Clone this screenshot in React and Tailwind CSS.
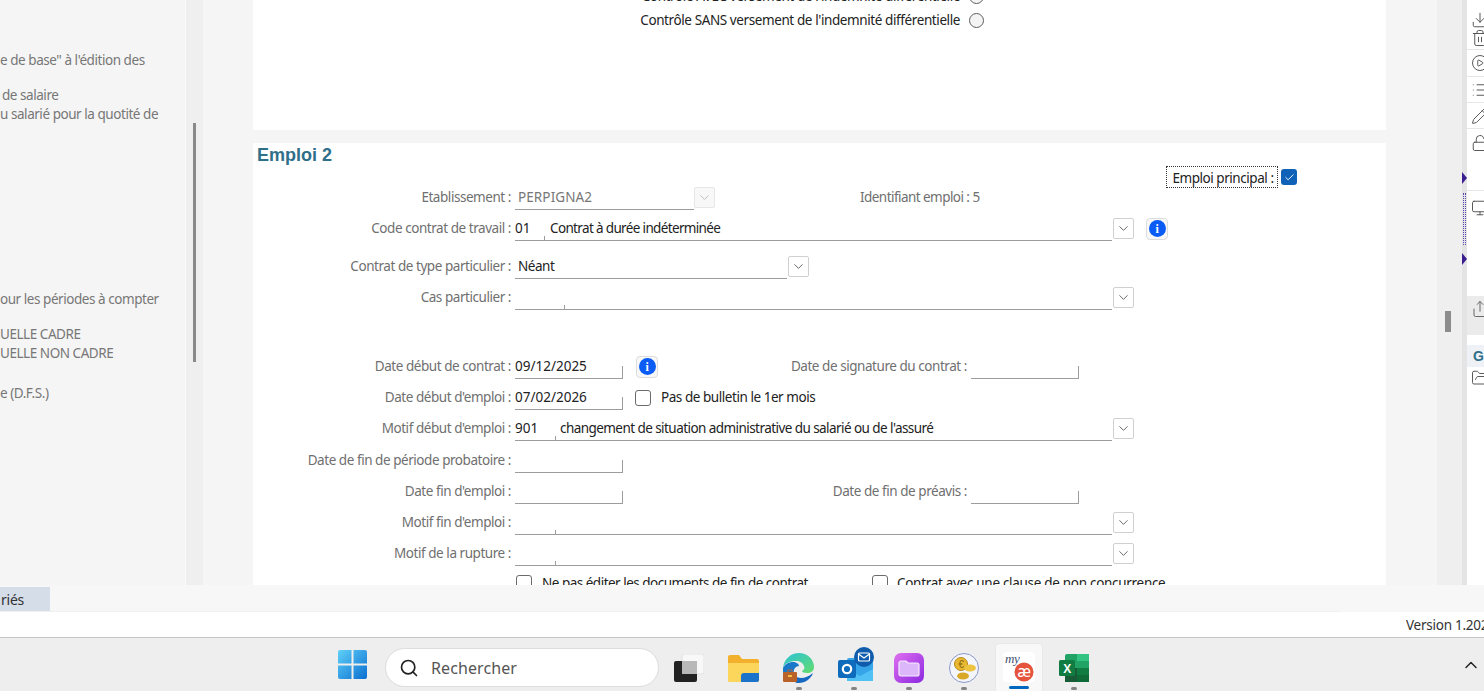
import React from "react";
import { Download, Trash2, CirclePlay, List, Pencil, LockOpen, Monitor, Share, FolderOpen, Check, ChevronDown, ChevronUp, Search } from "lucide-react";

const Label = ({ children, className = "w-[258px]" }) => (
  <div className={`${className} shrink-0 text-right text-[#6f6f6f] whitespace-nowrap`}>{children}</div>
);

const ComboBtn = ({ dim }) => (
  <div className={`w-[21px] h-[21px] shrink-0 border rounded-[2px] flex items-center justify-center ${dim ? "border-[#e6e6e6] text-[#b5b5b5] bg-[#f8f8f8]" : "border-[#d0d0d0] text-[#555555] bg-white"}`}>
    <ChevronDown size={15} strokeWidth={1.4} />
  </div>
);

const InfoBtn = () => (
  <div className="w-[22px] h-[22px] shrink-0 rounded-[4px] border border-[#dcdcdc] bg-[#f8f8f8] flex items-center justify-center">
    <div className="w-[17px] h-[17px] rounded-full bg-[#0b5cf5] flex items-center justify-center text-white text-[12px] font-bold leading-none [font-family:'Liberation_Serif',serif]">i</div>
  </div>
);

const DateField = ({ value, w = "w-[108px]" }) => (
  <div className={`${w} shrink-0 h-[23px] flex items-end justify-between border-b border-[#9c9c9c] mt-[1px]`}>
    <span className="self-center text-[#222222] tracking-normal">{value}</span>
    <span className="w-px h-[12px] bg-[#9c9c9c]"></span>
  </div>
);

// champ code + libelle, avec le petit trait de separation
const CodeField = ({ code, text, codeW = "w-[40px]", w = "w-[597px]", textClass = "" }) => (
  <div className="flex items-start">
    <div className={`${w} h-[23px] flex items-end border-b border-[#9c9c9c] mt-[1px] text-[#222222]`}>
      <span className={`${codeW} shrink-0 self-center tracking-normal`}>{code}</span>
      <span className="w-px h-[4px] bg-[#9c9c9c] shrink-0"></span>
      <span className={`self-center ml-[4px] whitespace-nowrap ${textClass}`}>{text}</span>
    </div>
    <div className="ml-px mt-px"><ComboBtn /></div>
  </div>
);

const Row = ({ label, children, className = "" }) => (
  <div className={`h-[31px] flex items-center gap-[4px] ${className}`}>
    <Label>{label}</Label>
    {children}
  </div>
);

const Box = ({ className = "" }) => <div className={`w-[16px] h-[16px] shrink-0 rounded-[3px] border border-[#6b6b6b] bg-white ${className}`}></div>;

const Radio = () => <div className="w-[15px] h-[15px] shrink-0 rounded-full border border-[#5f5f5f] bg-[#f4f4f4]"></div>;

function Form() {
  return (
    <div className="flex-1 flex flex-col overflow-hidden bg-[#f5f5f5]">
      <div className="h-[130px] shrink-0 bg-white overflow-hidden flex flex-col items-end pr-[402px] tracking-[-0.4px]">
        <div className="flex items-center gap-[9px] h-[24px] -mt-[16px] text-[#222222]">
          <span>Contrôle AVEC versement de l'indemnité différentielle</span><Radio />
        </div>
        <div className="flex items-center gap-[9px] h-[24px] text-[#222222]">
          <span>Contrôle SANS versement de l'indemnité différentielle</span><Radio />
        </div>
      </div>
      <div className="mt-[13px] flex-1 bg-white overflow-hidden">
        <div className="h-[39px] flex justify-between items-start pl-[4px] pr-[89px]">
          <div className="mt-[1px] text-[18px] tracking-normal leading-[22px] font-bold text-[#2f6f8a] [font-family:'Liberation_Sans',sans-serif]">Emploi 2</div>
          <div className="mt-[23px] flex items-center gap-[3px]">
            <div className="w-[112px] h-[22px] border border-dotted border-[#333333] flex items-center justify-center text-[#222222] pt-[2px] pl-[2px]">Emploi principal :</div>
            <div className="w-[16px] h-[16px] rounded-[3px] bg-[#0f62b8] flex items-center justify-center text-white"><Check size={11} strokeWidth={2} /></div>
          </div>
        </div>

        <Row label="Etablissement :">
          <div className="w-[179px] h-[23px] flex items-center border-b border-[#9c9c9c] mt-[1px] pl-[3px] text-[#777777] tracking-[0.1px]">PERPIGNA2</div>
          <div className="-ml-[4px]"><ComboBtn dim /></div>
          <div className="ml-[141px] text-[#6f6f6f] tracking-[-0.55px]">Identifiant emploi : 5</div>
        </Row>
        <Row label="Code contrat de travail :">
          <CodeField code="01" text="Contrat à durée indéterminée" codeW="w-[29px]" textClass="tracking-[-0.65px] ml-[5px]" />
          <div className="ml-[8px]"><InfoBtn /></div>
        </Row>
        <Row label="Contrat de type particulier :" className="mt-[7px]">
          <div className="w-[272px] h-[23px] flex items-center border-b border-[#9c9c9c] mt-[1px] pl-[3px] text-[#222222]">Néant</div>
          <div className="-ml-[3px]"><ComboBtn /></div>
        </Row>
        <Row label="Cas particulier :">
          <CodeField code="" text="" codeW="w-[49px]" />
        </Row>

        <Row label="Date début de contrat :" className="mt-[38px]">
          <DateField value="09/12/2025" />
          <div className="ml-[9px]"><InfoBtn /></div>
          <Label className="w-[305px]">Date de signature du contrat :</Label>
          <DateField value="" />
        </Row>
        <Row label="Date début d'emploi :">
          <DateField value="07/02/2026" />
          <Box className="ml-[8px]" />
          <span className="ml-[6px] text-[#222222]">Pas de bulletin le 1er mois</span>
        </Row>
        <Row label="Motif début d'emploi :">
          <CodeField code="901" text="changement de situation administrative du salarié ou de l'assuré" textClass="tracking-[-0.56px]" />
        </Row>
        <Row label="Date de fin de période probatoire :" className="mt-[1px]">
          <DateField value="" />
        </Row>
        <Row label="Date fin d'emploi :">
          <DateField value="" />
          <Label className="w-[340px]">Date de fin de préavis :</Label>
          <DateField value="" />
        </Row>
        <Row label="Motif fin d'emploi :"><CodeField code="" text="" /></Row>
        <Row label="Motif de la rupture :"><CodeField code="" text="" /></Row>
        <div className="h-[28px] flex items-center pl-[263px] text-[#222222]">
          <Box />
          <span className="ml-[10px] w-[330px] tracking-[-0.5px]">Ne pas éditer les documents de fin de contrat</span>
          <Box />
          <span className="ml-[9px] whitespace-nowrap tracking-[-0.3px]">Contrat avec une clause de non concurrence</span>
        </div>
      </div>
    </div>
  );
}

const Tool = ({ icon: Icon, h, sep, pt }) => (
  <div className={`${h} ${pt || ""} shrink-0 flex pl-[4px] ${pt ? "items-start" : "items-center"} ${sep ? "border-b border-[#e6e6e6]" : ""}`}>
    <Icon size={18} strokeWidth={1.3} className="shrink-0 text-[#555555]" />
  </div>
);

function Toolbar() {
  return (
    <div className="w-[17px] shrink-0 bg-white overflow-hidden flex flex-col">
      <div className="h-[11px] shrink-0"></div>
      <Tool icon={Download} h="h-[18px]" />
      <Tool icon={Trash2} h="h-[21px]" sep pt="pt-0" />
      <Tool icon={CirclePlay} h="h-[27px]" sep />
      <Tool icon={List} h="h-[26px]" sep />
      <Tool icon={Pencil} h="h-[26px]" sep />
      <Tool icon={LockOpen} h="h-[62px]" pt="pt-[5px]" sep />
      <Tool icon={Monitor} h="h-[105px]" pt="pt-[8px]" />
      <div className="h-[39px] shrink-0 bg-[#ebebeb] flex items-start pl-[4px] pt-[4px] text-[#666666]"><Share size={18} strokeWidth={1.3} className="shrink-0" /></div>
      <div className="h-[10px] shrink-0"></div>
      <div className="h-[22px] shrink-0 bg-[#eef2f6] pl-[6px] flex items-center text-[14px] font-bold text-[#2f6f8a] [font-family:'Liberation_Sans',sans-serif]">G</div>
      <Tool icon={FolderOpen} h="h-[22px]" />
    </div>
  );
}

const Tri = () => (
  <svg width="5" height="12" viewBox="0 0 5 12" className="shrink-0"><path d="M0 0L5 6L0 12Z" fill="#3b1e8f" /></svg>
);

function MyAe() {
  return (
    <svg width="32" height="30" viewBox="0 0 32 30">
      <rect width="32" height="30" rx="4" fill="#ffffff" />
      <text x="2" y="11" fontSize="13" fontStyle="italic" fill="#3f4f6e" fontFamily="Liberation Serif, serif">my</text>
      <circle cx="21" cy="20" r="9.500" fill="#e5533d" />
      <text x="21" y="25" fontSize="16" textAnchor="middle" fill="#ffffff" fontFamily="Noto Sans, sans-serif">æ</text>
    </svg>
  );
}

const Slot = ({ children, pill }) => (
  <div className="w-[55px] shrink-0 h-full flex flex-col items-center">
    <div className="h-[15px] shrink-0"></div>
    <div className="h-[30px] w-full flex items-center justify-center">{children}</div>
    {pill && <div className="mt-[4px] w-[6px] h-[3px] rounded-full bg-[#858585]"></div>}
  </div>
);

function Taskbar() {
  return (
    <div className="h-[54px] shrink-0 bg-[#eeeeee] border-t border-[#c6c6c6] flex items-stretch">
      <div className="ml-[338px] self-center shrink-0 -mt-[1px]">
        <svg width="29" height="29" viewBox="0 0 29 29">
          <defs>
            <linearGradient id="win" x1="0" y1="0" x2="1" y2="1"><stop offset="0" stopColor="#5fd0f8" /><stop offset="1" stopColor="#0a6fd0" /></linearGradient>
          </defs>
          <path d="M0 2a2 2 0 0 1 2-2h11.500v13.500H0zM15.500 0H27a2 2 0 0 1 2 2v11.500H15.500zM0 15.500h13.500V29H2a2 2 0 0 1-2-2zM15.500 15.500H29V27a2 2 0 0 1-2 2H15.500z" fill="url(#win)" />
        </svg>
      </div>
      <div className="ml-[18px] mt-[10px] w-[274px] h-[39px] shrink-0 rounded-full bg-white border border-[#dcdcdc] flex items-center pl-[13px] text-[#555555] text-[16px] tracking-[0.1px]">
        <Search size={20} strokeWidth={2} className="text-[#222222] shrink-0" />
        <span className="ml-[12px]">Rechercher</span>
      </div>
      <div className="ml-[2px] flex h-full">
        <Slot>
          <svg width="30" height="28" viewBox="0 0 30 28">
            <rect x="8" y="0" width="22" height="20" rx="2" fill="#f8f8f8" stroke="#e2e2e2" />
            <rect x="0" y="7" width="23" height="21" rx="2" fill="#222222" />
            <rect x="8" y="7" width="15" height="13" fill="#b8b8b8" />
          </svg>
        </Slot>
        <Slot>
          <svg width="31" height="27" viewBox="0 0 31 27">
            <path d="M0 2a2 2 0 0 1 2-2h9l3 4h15a2 2 0 0 1 2 2v19a2 2 0 0 1-2 2H2a2 2 0 0 1-2-2z" fill="#f2b02c" />
            <path d="M0 8h31v17a2 2 0 0 1-2 2H2a2 2 0 0 1-2-2z" fill="#fbd65b" />
            <path d="M16 18h15v7a2 2 0 0 1-2 2H13v-6a3 3 0 0 1 3-3z" fill="#1b74c9" />
          </svg>
        </Slot>
        <Slot pill>
          <svg width="31" height="30" viewBox="0 0 31 30">
            <defs>
              <linearGradient id="edge" x1="0" y1="0" x2="1" y2="1"><stop offset="0" stopColor="#2cc3d8" /><stop offset="1" stopColor="#63dc6e" /></linearGradient>
            </defs>
            <path d="M0 15C1 6 8 0 16 0c8 0 15 6 15 14 0 4-3 6-7 6-3 0-5-1-5-2 2-1 3-3 2-5-1-3-4-5-8-5C7 8 2 10 0 15z" fill="url(#edge)" />
            <path d="M0 15c2-4 6-6 10-6 3 0 6 2 6 4-3 0-6 3-5 7H0z" fill="#1a78c8" />
            <path d="M12 23c4 3 11 3 18-3-2 6-8 10-14 10-2 0-3 0-4-1z" fill="#1668c0" />
            <rect x="0" y="19" width="14" height="10" rx="1" fill="#b8622a" />
            <rect x="5" y="17" width="4" height="3" fill="none" stroke="#b8622a" />
            <rect x="5" y="22" width="4" height="2" fill="#f3c14a" />
          </svg>
        </Slot>
        <Slot pill>
          <svg width="36" height="36" viewBox="0 0 36 36" className="-mt-[6px] ml-[4px]">
            <rect x="9" y="11" width="26" height="23" rx="2" fill="#35a5e8" />
            <path d="M9 22l13 7 13-7v12H9z" fill="#50c0f5" />
            <rect x="0" y="13" width="18" height="18" rx="2" fill="#0f6cbd" />
            <circle cx="9" cy="22" r="4.200" fill="none" stroke="#ffffff" strokeWidth="2.200" />
            <circle cx="26" cy="10" r="10" fill="#0f5cad" />
            <rect x="20.500" y="6" width="11" height="8" rx="1" fill="none" stroke="#ffffff" strokeWidth="1.200" />
            <path d="M20.500 7l5.500 4 5.500-4" fill="none" stroke="#ffffff" strokeWidth="1.200" />
          </svg>
        </Slot>
        <Slot pill>
          <svg width="30" height="30" viewBox="0 0 30 30">
            <defs>
              <linearGradient id="pur" x1="0" y1="0" x2="1" y2="1"><stop offset="0" stopColor="#e070f0" /><stop offset="1" stopColor="#8a28e0" /></linearGradient>
            </defs>
            <rect width="30" height="30" rx="7" fill="url(#pur)" />
            <path d="M5 10a2 2 0 0 1 2-2h5l2 2h9a2 2 0 0 1 2 2v9a2 2 0 0 1-2 2H7a2 2 0 0 1-2-2z" fill="#dcb8fa" stroke="#f6ebff" strokeWidth="1.200" />
          </svg>
        </Slot>
        <Slot pill>
          <svg width="30" height="30" viewBox="0 0 30 30">
            <circle cx="15" cy="15" r="14.500" fill="#f4f6fb" stroke="#8b97c9" />
            <circle cx="12" cy="11" r="6.500" fill="#e8b930" stroke="#b98a1a" />
            <text x="12" y="14.500" fontSize="10" textAnchor="middle" fill="#8a6410" fontFamily="Liberation Sans, sans-serif">€</text>
            <ellipse cx="21" cy="15" rx="6" ry="3.500" fill="#edc440" />
            <ellipse cx="14" cy="23" rx="6" ry="3.500" fill="#d9a828" />
          </svg>
        </Slot>
        <div className="w-[55px] shrink-0 h-full flex justify-center">
          <div className="w-[48px] h-[48px] mt-[5px] rounded-t-[4px] bg-[#f8f8f8] border border-[#e8e8e8] border-b-0 flex flex-col items-center">
            <div className="mt-[8px]"><MyAe /></div>
            <div className="mt-[4px] w-[20px] h-[3px] rounded-full bg-[#0067c0]"></div>
          </div>
        </div>
        <Slot pill>
          <svg width="30" height="28" viewBox="0 0 30 28">
            <rect x="6" y="0" width="24" height="28" rx="2" fill="#21a366" />
            <rect x="18" y="0" width="12" height="7" fill="#33c481" />
            <rect x="18" y="14" width="12" height="7" fill="#107c41" />
            <rect x="6" y="14" width="12" height="14" fill="#185c37" />
            <rect x="18" y="21" width="12" height="7" fill="#0e6b38" />
            <rect x="0" y="6" width="16" height="16" rx="1.500" fill="#107c41" />
            <text x="8" y="18.500" fontSize="12" fontWeight="700" textAnchor="middle" fill="#ffffff" fontFamily="Liberation Sans, sans-serif">X</text>
          </svg>
        </Slot>
      </div>
      <div className="ml-auto mr-[3px] self-center text-[#222222]"><ChevronUp size={20} strokeWidth={1.7} /></div>
    </div>
  );
}

export default function App() {
  return (
    <div className="w-[1484px] h-[691px] overflow-hidden flex flex-col bg-white text-[13.5px] tracking-[-0.45px] [font-family:'Noto_Sans',sans-serif]">
      <div className="h-[585px] shrink-0 flex overflow-hidden">
        <div className="w-[185px] shrink-0 bg-[#f5f5f5] text-[#777777] whitespace-nowrap overflow-hidden">
          <div className="mt-[51px] h-[19px] leading-[19px]">e de base" à l'édition des</div>
          <div className="mt-[16px] h-[19px] leading-[19px] pl-[2px]">de salaire</div>
          <div className="h-[19px] leading-[19px]">u salarié pour la quotité de</div>
          <div className="mt-[166px] h-[19px] leading-[19px]">our les périodes à compter</div>
          <div className="mt-[16px] h-[19px] leading-[19px]">UELLE CADRE</div>
          <div className="h-[19px] leading-[19px]">UELLE NON CADRE</div>
          <div className="mt-[21px] h-[19px] leading-[19px]">e (D.F.S.)</div>
        </div>
        <div className="w-[18px] shrink-0 bg-[#efefef] border-l border-[#fafafa] pl-[7px] pt-[123px]">
          <div className="w-[3px] h-[239px] bg-[#8a8a8a]"></div>
        </div>
        <div className="w-[50px] shrink-0 bg-[#f5f5f5]"></div>
        <div className="w-[1133px] shrink-0 flex"><Form /></div>
        <div className="w-[51px] shrink-0 bg-[#f5f5f5]"></div>
        <div className="w-[25px] shrink-0 bg-[#efefef] pl-[8px] pt-[311px]">
          <div className="w-[6px] h-[21px] bg-[#8c8c8c]"></div>
        </div>
        <div className="w-[5px] shrink-0 bg-[#e4e4e4] flex flex-col items-center pt-[172px]">
          <Tri />
          <div className="mt-[9px] h-[52px] w-[3px] border-x border-dotted border-[#5a4bb0]"></div>
          <div className="mt-[8px]"><Tri /></div>
        </div>
        <Toolbar />
      </div>
      <div className="h-[27px] shrink-0 bg-[#f7f7f7] pt-[2px]">
        <div className="w-[50px] h-[24px] bg-[#d5dde8] flex items-center justify-end pr-[26px] text-[#333333] text-[14px] tracking-[-0.25px]">riés</div>
        <div className="w-[1340px] h-px bg-[#f0f0f0]"></div>
      </div>
      <div className="h-[25px] shrink-0 bg-white flex items-center justify-end pt-[2px] text-[#333333] tracking-[-0.25px] whitespace-nowrap overflow-hidden">
        <div className="w-[78px] shrink-0 overflow-hidden">Version 1.2025</div>
      </div>
      <Taskbar />
    </div>
  );
}
